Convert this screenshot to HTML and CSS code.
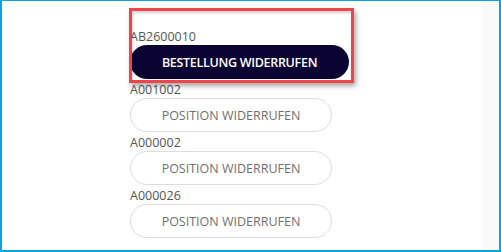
FILE: index.html
```html
<!DOCTYPE html>
<html lang="de">
<head>
<meta charset="utf-8">
<title>Widerrufen</title>
<link rel="stylesheet" href="styles.css">
</head>
<body>
<div class="frame">
  <div class="track"></div>
  <ul class="list">
    <li class="item">
      <div class="label">AB2600010</div>
      <button class="btn btn-dark">BESTELLUNG WIDERRUFEN</button>
    </li>
    <li class="item">
      <div class="label">A001002</div>
      <button class="btn btn-outline">POSITION WIDERRUFEN</button>
    </li>
    <li class="item">
      <div class="label">A000002</div>
      <button class="btn btn-outline">POSITION WIDERRUFEN</button>
    </li>
    <li class="item">
      <div class="label">A000026</div>
      <button class="btn btn-outline">POSITION WIDERRUFEN</button>
    </li>
  </ul>
  <div class="highlight"></div>
</div>
</body>
</html>
```

FILE: styles.css
```css
html, body {
  margin: 0;
  padding: 0;
  background: #ffffff;
}

.frame {
  position: relative;
  box-sizing: border-box;
  width: 501px;
  height: 252px;
  border-style: solid;
  border-color: #0aa3e2;
  border-width: 1px 2px 2px 2px;
  overflow: hidden;
  background: #ffffff;
  font-family: "Open Sans", "Liberation Sans", sans-serif;
}

.track {
  position: absolute;
  top: 0;
  right: 0;
  width: 16px;
  height: 100%;
  background: #fafafa;
}

.list {
  list-style: none;
  margin: 0;
  padding: 25px 0 0 128px;
}

.item {
  display: flex;
  flex-direction: column;
  align-items: flex-start;
}

.label {
  height: 19px;
  line-height: 21px;
  font-size: 12.5px;
  color: #555555;
}

.btn {
  box-sizing: border-box;
  height: 34px;
  border-radius: 17px;
  padding: 0;
  font-family: "Open Sans", "Liberation Sans", sans-serif;
  font-size: 12.5px;
  text-align: center;
  cursor: pointer;
}

.btn-dark {
  width: 219px;
  background: #0b0433;
  border: none;
  color: #ffffff;
  font-weight: 600;
  letter-spacing: -0.3px;
}

.btn-outline {
  width: 202px;
  background: #ffffff;
  border: 1px solid #dcdcdc;
  color: #707070;
  font-weight: 400;
}

.highlight {
  position: absolute;
  left: 127px;
  top: 7px;
  width: 225px;
  height: 75px;
  box-sizing: border-box;
  border: 3px solid #f2434a;
  box-shadow: 2px 3px 5px rgba(0, 0, 0, 0.35), inset 1px 2px 3px rgba(0, 0, 0, 0.18);
  pointer-events: none;
}
```
